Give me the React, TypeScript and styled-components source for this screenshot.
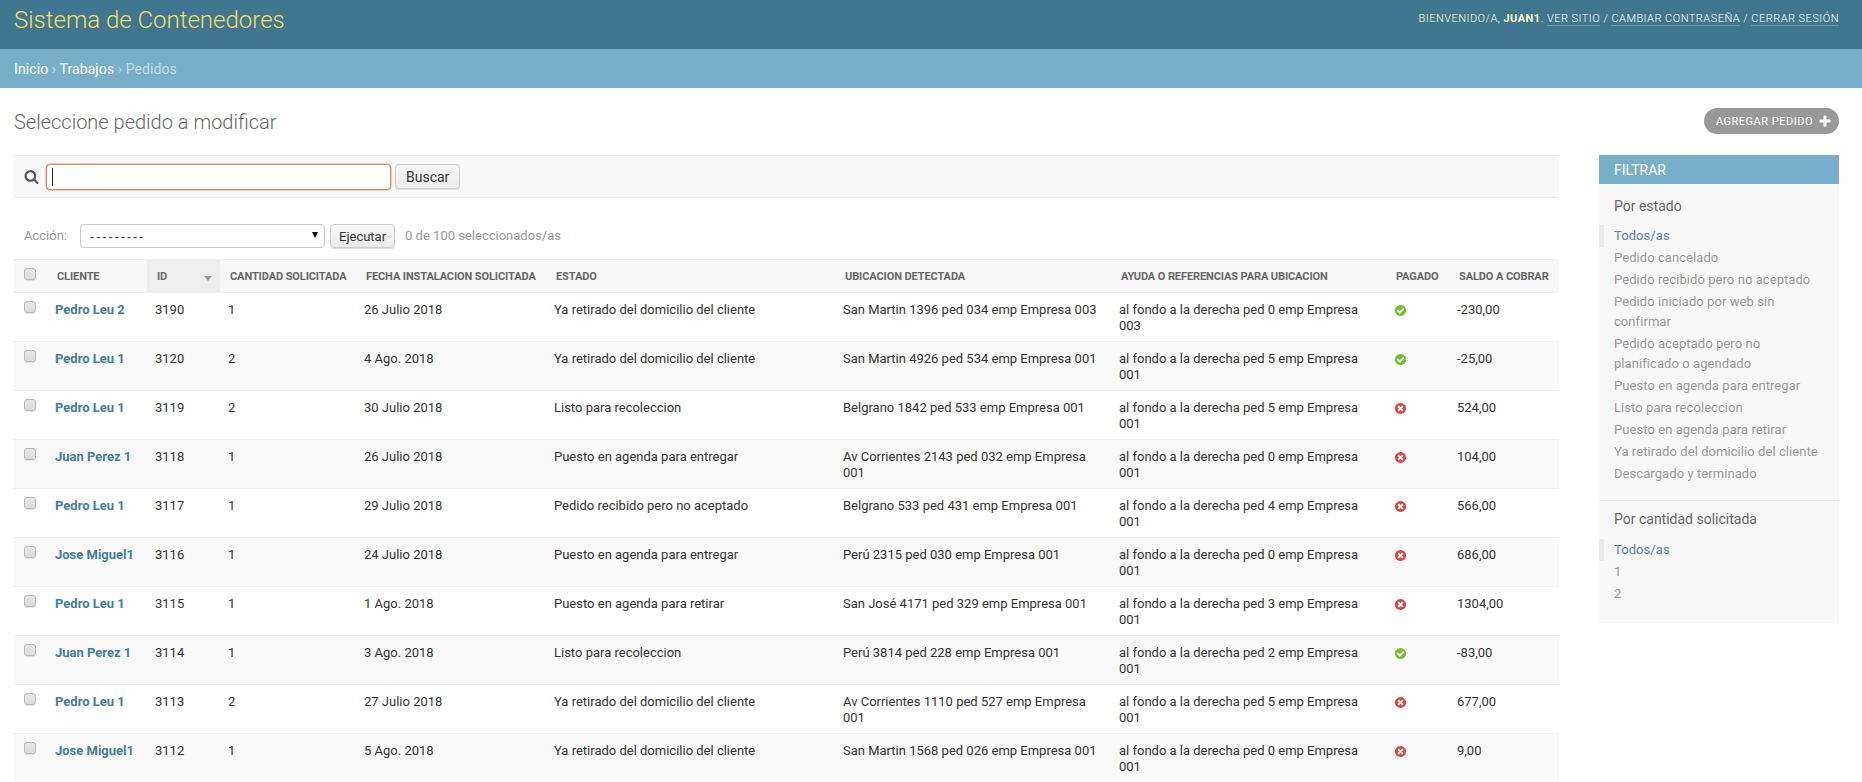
import React from "react";
import styled, { createGlobalStyle } from "styled-components";

const Global = createGlobalStyle`
  html, body { margin: 0; padding: 0; height: 782px; overflow: hidden; background: #fff; }
  body { font-family: Roboto, "Liberation Sans", sans-serif; font-size: 14px; color: #333; }
  * { box-sizing: border-box; }
`;

const Header = styled.header`
  height: 49px;
  background: #417690;
  display: flex;
  align-items: flex-start;
  justify-content: space-between;
  padding: 0 23px 0 14px;
`;
const Branding = styled.h1`
  margin: 0;
  padding-top: 8px;
  font-size: 24px;
  line-height: 24px;
  font-weight: 300;
  color: #f5dd5d;
`;
const UserTools = styled.div`
  padding-top: 12px;
  font-size: 11px;
  line-height: 14px;
  font-weight: 300;
  letter-spacing: 0.48px;
  text-transform: uppercase;
  color: #ffc;
  strong { font-weight: 700; }
  a {
    color: #fff;
    text-decoration: none;
    border-bottom: 1px solid rgba(255, 255, 255, 0.25);
  }
`;
const Breadcrumbs = styled.nav`
  height: 39px;
  background: #79aec8;
  padding: 10px 14px;
  font-size: 14px;
  font-weight: 400;
  line-height: 20px;
  letter-spacing: 0.1px;
  color: #c4dce8;
  a { color: #fff; text-decoration: none; }
`;
const Content = styled.main`
  padding: 20px 23px 0 14px;
`;
const TitleRow = styled.div`
  height: 47px;
  display: flex;
  justify-content: space-between;
  align-items: flex-start;
`;
const Title = styled.h2`
  margin: 0;
  font-size: 20px;
  line-height: 28px;
  font-weight: 300;
  color: #666;
`;
const AddLink = styled.a`
  display: flex;
  align-items: center;
  gap: 5px;
  height: 26px;
  padding: 0 7px 0 12px;
  background: #999;
  color: #fff;
  border-radius: 15px;
  font-size: 11px;
  letter-spacing: 0.5px;
  text-transform: uppercase;
`;
const Columns = styled.div`
  display: flex;
  gap: 40px;
  align-items: flex-start;
`;
const Changelist = styled.section`
  flex: 1;
  min-width: 0;
`;
const Toolbar = styled.form`
  height: 43px;
  display: flex;
  align-items: center;
  gap: 4px;
  padding: 0 10px;
  background: #f8f8f8;
  border-top: 1px solid #eee;
  border-bottom: 1px solid #eee;
`;
const SearchGlyph = styled.svg`
  width: 15px;
  height: 15px;
  margin-right: 3px;
  flex: none;
`;
const SearchField = styled.div`
  position: relative;
  width: 345px;
  height: 26px;
`;
const SearchInput = styled.input`
  width: 100%;
  height: 100%;
  padding: 2px 6px;
  border: 1px solid #e0886a;
  border-radius: 4px;
  box-shadow: 0 0 0 0.5px #e0a08a;
  outline: none;
  background: #fff;
  font: 13px Roboto, sans-serif;
  caret-color: transparent;
`;
const Caret = styled.span`
  position: absolute;
  left: 6px;
  top: 4px;
  width: 1px;
  height: 18px;
  background: #222;
`;
const Button = styled.button<{ $h: number; $size: number; $pad: number }>`
  height: ${(p) => p.$h}px;
  padding: 0 ${(p) => p.$pad}px;
  border: 1px solid #ccc;
  border-radius: 4px;
  background: linear-gradient(#f8f8f8, #ececec);
  box-shadow: 0 1px 0 #ddd;
  font: ${(p) => p.$size}px Roboto, sans-serif;
  color: #333;
`;
const Actions = styled.div`
  height: 61px;
  padding: 26px 10px 0;
  display: flex;
  align-items: flex-start;
  font-size: 13px;
  color: #999;
`;
const ActionLabel = styled.label`
  line-height: 24px;
  width: 56px;
`;
const ActionSelect = styled.select`
  appearance: none;
  width: 245px;
  height: 24px;
  margin-right: 5px;
  padding: 0 9px;
  border: 1px solid #ccc;
  border-radius: 4px;
  font: 13px "Liberation Sans", sans-serif;
  letter-spacing: 1.8px;
  color: #333;
  background: #fff url("data:image/svg+xml,%3Csvg xmlns='http://www.w3.org/2000/svg' width='8' height='8'%3E%3Cpath d='M1 1h6L4 7z' fill='%23111'/%3E%3C/svg%3E") no-repeat right 5px top 6px;
`;
const Counter = styled.span`
  margin-left: 10px;
  line-height: 23px;
`;
const Table = styled.table`
  width: 100%;
  table-layout: fixed;
  border-collapse: separate;
  border-spacing: 0;
  font-size: 13px;
  line-height: 16px;
`;
const HeadCell = styled.th<{ $sorted?: boolean }>`
  position: relative;
  height: 34px;
  padding: 2px 0 0 10px;
  border-top: 1px solid #eee;
  border-bottom: 1px solid #eee;
  background: ${(p) => (p.$sorted ? "#eee" : "#f6f6f6")};
  font-size: 11px;
  font-weight: 700;
  letter-spacing: -0.1px;
  text-transform: uppercase;
  color: #666;
  text-align: left;
  white-space: nowrap;
`;
const SortArrow = styled.span`
  position: absolute;
  right: 8px;
  top: 16px;
  border-left: 4px solid transparent;
  border-right: 4px solid transparent;
  border-top: 5px solid #999;
`;
const Row = styled.tr<{ $even: boolean }>`
  background: ${(p) => (p.$even ? "#f9f9f9" : "#fff")};
`;
const Cell = styled.td`
  padding: 9px 10px 7px 8px;
  border-bottom: 1px solid #eee;
  vertical-align: top;
  color: #333;
`;
const ClientLink = styled.a`
  color: #447e9b;
  font-weight: 700;
  white-space: nowrap;
`;
const Check = styled.input.attrs({ type: "checkbox" })`
  appearance: none;
  display: block;
  width: 12px;
  height: 12px;
  margin: -1px 0 0 2px;
  border: 1px solid #b8b8b8;
  border-radius: 3px;
  background: linear-gradient(#e6e6e6, #dcdcdc);
  box-shadow: 0 1px 0 #e4e4e4;
`;
const HeadCheck = styled(Check)`
  margin: -6px 0 0 0;
`;
const BoolIcon = styled.svg`
  display: block;
  width: 13px;
  height: 13px;
  margin: 2px 0 0 0;
`;
const Filter = styled.aside`
  flex: none;
  width: 240px;
  background: #f8f8f8;
  padding-bottom: 18px;
`;
const FilterTitle = styled.h3`
  margin: 0;
  height: 29px;
  padding: 5px 15px;
  font-size: 14px;
  line-height: 20px;
  font-weight: 400;
  text-transform: uppercase;
  background: #79aec8;
  color: #fff;
`;
const FilterHeading = styled.h4<{ $first?: boolean }>`
  margin: ${(p) => (p.$first ? "14px 15px 11px" : "10px 15px 12px")};
  font-size: 14px;
  line-height: 16px;
  font-weight: 400;
  color: #666;
`;
const FilterList = styled.ul<{ $divider?: boolean }>`
  margin: 0;
  padding: 0 0 ${(p) => (p.$divider ? "15px" : "0")};
  list-style: none;
  border-bottom: ${(p) => (p.$divider ? "1px solid #eaeaea" : "none")};
`;
const FilterItem = styled.li<{ $selected?: boolean }>`
  padding: 1px 15px 1px ${(p) => (p.$selected ? "10px" : "15px")};
  border-left: ${(p) => (p.$selected ? "5px solid #eaeaea" : "none")};
  font-size: 13px;
  line-height: 20px;
  letter-spacing: 0.07px;
  color: ${(p) => (p.$selected ? "#5b80b2" : "#999")};
`;

const YES = "M1412 734q0-28-18-46l-91-90q-19-19-45-19t-45 19l-408 407-226-226q-19-19-45-19t-45 19l-91 90q-18 18-18 46 0 27 18 45l362 362q19 19 45 19 27 0 46-19l543-543q18-18 18-45zm252 162q0 209-103 385.5t-279.5 279.5-385.5 103-385.5-103-279.5-279.5-103-385.5 103-385.5 279.5-279.5 385.5-103 385.5 103 279.5 279.5 103 385.5z";
const NO = "M1277 1122q0-26-19-45l-181-181 181-181q19-19 19-45 0-27-19-46l-90-90q-19-19-46-19-26 0-45 19l-181 181-181-181q-19-19-45-19-27 0-46 19l-90 90q-19 19-19 46 0 26 19 45l181 181-181 181q-19 19-19 45 0 27 19 46l90 90q19 19 46 19 26 0 45-19l181-181 181 181q19 19 45 19 27 0 46-19l90-90q19-19 19-46zm387-226q0 209-103 385.5t-279.5 279.5-385.5 103-385.5-103-279.5-279.5-103-385.5 103-385.5 279.5-279.5 385.5-103 385.5 103 279.5 279.5 103 385.5z";
const SEARCH = "M1216 832q0-185-131.5-316.5t-316.5-131.5-316.5 131.5-131.5 316.5 131.5 316.5 316.5 131.5 316.5-131.5 131.5-316.5zm512 832q0 52-38 90t-90 38q-54 0-90-38l-343-342q-179 124-399 124-143 0-273.5-55.5t-225-150-150-225-55.5-273.5 55.5-273.5 150-225 225-150 273.5-55.5 273.5 55.5 225 150 150 225 55.5 273.5q0 220-124 399l343 343q37 37 37 90z";
const PLUS = "M1600 796v192q0 40-28 68t-68 28h-416v416q0 40-28 68t-68 28h-192q-40 0-68-28t-28-68v-416h-416q-40 0-68-28t-28-68v-192q0-40 28-68t68-28h416v-416q0-40 28-68t68-28h192q40 0 68 28t28 68v416h416q40 0 68 28t28 68z";

const columns: [string, number][] = [
  ["", 33], ["Cliente", 100], ["ID", 73], ["Cantidad solicitada", 136],
  ["Fecha instalacion solicitada", 190], ["Estado", 289], ["Ubicacion detectada", 276],
  ["Ayuda o referencias para ubicacion", 275], ["Pagado", 63], ["Saldo a cobrar", 110],
];

const rows = [
  ["Pedro Leu 2", "3190", "1", "26 Julio 2018", "Ya retirado del domicilio del cliente", "San Martin 1396 ped 034 emp Empresa 003", "al fondo a la derecha ped 0 emp Empresa 003", true, "-230,00"],
  ["Pedro Leu 1", "3120", "2", "4 Ago. 2018", "Ya retirado del domicilio del cliente", "San Martin 4926 ped 534 emp Empresa 001", "al fondo a la derecha ped 5 emp Empresa 001", true, "-25,00"],
  ["Pedro Leu 1", "3119", "2", "30 Julio 2018", "Listo para recoleccion", "Belgrano 1842 ped 533 emp Empresa 001", "al fondo a la derecha ped 5 emp Empresa 001", false, "524,00"],
  ["Juan Perez 1", "3118", "1", "26 Julio 2018", "Puesto en agenda para entregar", "Av Corrientes 2143 ped 032 emp Empresa 001", "al fondo a la derecha ped 0 emp Empresa 001", false, "104,00"],
  ["Pedro Leu 1", "3117", "1", "29 Julio 2018", "Pedido recibido pero no aceptado", "Belgrano 533 ped 431 emp Empresa 001", "al fondo a la derecha ped 4 emp Empresa 001", false, "566,00"],
  ["Jose Miguel1", "3116", "1", "24 Julio 2018", "Puesto en agenda para entregar", "Perú 2315 ped 030 emp Empresa 001", "al fondo a la derecha ped 0 emp Empresa 001", false, "686,00"],
  ["Pedro Leu 1", "3115", "1", "1 Ago. 2018", "Puesto en agenda para retirar", "San José 4171 ped 329 emp Empresa 001", "al fondo a la derecha ped 3 emp Empresa 001", false, "1304,00"],
  ["Juan Perez 1", "3114", "1", "3 Ago. 2018", "Listo para recoleccion", "Perú 3814 ped 228 emp Empresa 001", "al fondo a la derecha ped 2 emp Empresa 001", true, "-83,00"],
  ["Pedro Leu 1", "3113", "2", "27 Julio 2018", "Ya retirado del domicilio del cliente", "Av Corrientes 1110 ped 527 emp Empresa 001", "al fondo a la derecha ped 5 emp Empresa 001", false, "677,00"],
  ["Jose Miguel1", "3112", "1", "5 Ago. 2018", "Ya retirado del domicilio del cliente", "San Martin 1568 ped 026 emp Empresa 001", "al fondo a la derecha ped 0 emp Empresa 001", false, "9,00"],
] as const;

const estados = [
  "Pedido cancelado", "Pedido recibido pero no aceptado", "Pedido iniciado por web sin confirmar",
  "Pedido aceptado pero no planificado o agendado", "Puesto en agenda para entregar", "Listo para recoleccion",
  "Puesto en agenda para retirar", "Ya retirado del domicilio del cliente", "Descargado y terminado",
];

export default function App() {
  return (
    <>
      <Global />
      <Header>
        <Branding>Sistema de Contenedores</Branding>
        <UserTools>
          Bienvenido/a, <strong>juan1</strong>. <a>Ver sitio</a> / <a>Cambiar contraseña</a> / <a>Cerrar sesión</a>
        </UserTools>
      </Header>
      <Breadcrumbs>
        <a>Inicio</a> › <a>Trabajos</a> › Pedidos
      </Breadcrumbs>
      <Content>
        <TitleRow>
          <Title>Seleccione pedido a modificar</Title>
          <AddLink>
            Agregar pedido
            <svg width="14" height="14" viewBox="0 0 1792 1792"><path fill="#fff" d={PLUS} /></svg>
          </AddLink>
        </TitleRow>
        <Columns>
          <Changelist>
            <Toolbar>
              <SearchGlyph viewBox="0 0 1792 1792"><path fill="#555" d={SEARCH} /></SearchGlyph>
              <SearchField>
                <SearchInput />
                <Caret />
              </SearchField>
              <Button $h={25} $size={14} $pad={10}>Buscar</Button>
            </Toolbar>
            <Actions>
              <ActionLabel>Acción:</ActionLabel>
              <ActionSelect defaultValue="">
                <option value="">---------</option>
              </ActionSelect>
              <Button $h={24} $size={13} $pad={8}>Ejecutar</Button>
              <Counter>0 de 100 seleccionados/as</Counter>
            </Actions>
            <Table>
              <colgroup>
                {columns.map(([n, w]) => <col key={n} style={{ width: w }} />)}
              </colgroup>
              <thead>
                <tr>
                  {columns.map(([n], i) => (
                    <HeadCell key={n} $sorted={n === "ID"}>
                      {i === 0 ? <HeadCheck /> : n}
                      {n === "ID" && <SortArrow />}
                    </HeadCell>
                  ))}
                </tr>
              </thead>
              <tbody>
                {rows.map((r, i) => (
                  <Row key={r[1]} $even={i % 2 === 1}>
                    <Cell><Check /></Cell>
                    <Cell><ClientLink>{r[0]}</ClientLink></Cell>
                    <Cell>{r[1]}</Cell>
                    <Cell>{r[2]}</Cell>
                    <Cell>{r[3]}</Cell>
                    <Cell>{r[4]}</Cell>
                    <Cell>{r[5]}</Cell>
                    <Cell>{r[6]}</Cell>
                    <Cell>
                      <BoolIcon viewBox="0 0 1792 1792">
                        <path fill={r[7] ? "#70bf2b" : "#dd4646"} d={r[7] ? YES : NO} />
                      </BoolIcon>
                    </Cell>
                    <Cell>{r[8]}</Cell>
                  </Row>
                ))}
              </tbody>
            </Table>
          </Changelist>
          <Filter>
            <FilterTitle>Filtrar</FilterTitle>
            <FilterHeading $first>Por estado</FilterHeading>
            <FilterList $divider>
              <FilterItem $selected>Todos/as</FilterItem>
              {estados.map((e) => <FilterItem key={e}>{e}</FilterItem>)}
            </FilterList>
            <FilterHeading>Por cantidad solicitada</FilterHeading>
            <FilterList>
              <FilterItem $selected>Todos/as</FilterItem>
              <FilterItem>1</FilterItem>
              <FilterItem>2</FilterItem>
            </FilterList>
          </Filter>
        </Columns>
      </Content>
    </>
  );
}
